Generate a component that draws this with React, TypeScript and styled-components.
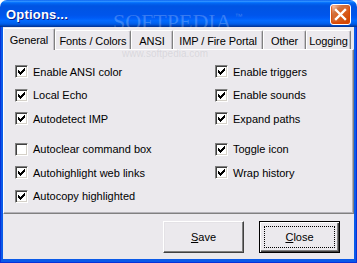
import styled, { createGlobalStyle } from 'styled-components';

const GlobalStyle = createGlobalStyle`
  html, body {
    margin: 0;
    padding: 0;
    background: #fff;
  }
  body {
    font-family: "Liberation Sans", Arial, sans-serif;
    font-size: 11px;
    color: #000;
  }
`;

type Option = { label: string; checked: boolean };

const tabs = [
  { label: 'General', width: 52 },
  { label: 'Fonts / Colors', width: 76 },
  { label: 'ANSI', width: 42 },
  { label: 'IMP / Fire Portal', width: 90 },
  { label: 'Other', width: 43 },
  { label: 'Logging', width: 45 },
];

const leftGroups: Option[][] = [
  [
    { label: 'Enable ANSI color', checked: true },
    { label: 'Local Echo', checked: true },
    { label: 'Autodetect IMP', checked: true },
  ],
  [
    { label: 'Autoclear command box', checked: false },
    { label: 'Autohighlight web links', checked: true },
    { label: 'Autocopy highlighted', checked: true },
  ],
];

const rightGroups: Option[][] = [
  [
    { label: 'Enable triggers', checked: true },
    { label: 'Enable sounds', checked: true },
    { label: 'Expand paths', checked: true },
  ],
  [
    { label: 'Toggle icon', checked: true },
    { label: 'Wrap history', checked: true },
  ],
];

// classic 7px tick, one column at a time
const tick = [4, 5, 6, 5, 4, 3, 2];

const Check = ({ checked }: { checked: boolean }) => (
  <CheckBox>
    {checked && (
      <svg width='11' height='11' viewBox='0 0 11 11' shapeRendering='crispEdges'>
        {tick.map((y, i) => (
          <rect key={i} x={2 + i} y={y} width='1' height='3' fill='#000' />
        ))}
      </svg>
    )}
  </CheckBox>
);

const OptionColumn = ({ groups, width }: { groups: Option[][]; width?: number }) => (
  <Column $width={width}>
    {groups.map((group, gi) => (
      <Group key={gi}>
        {group.map((o) => (
          <Row key={o.label}>
            <Check checked={o.checked} />
            <span>{o.label}</span>
          </Row>
        ))}
      </Group>
    ))}
  </Column>
);

export default function App() {
  return (
    <>
      <GlobalStyle />
      <Window>
        <TitleBar>
          <Title>Options...</Title>
          <Watermark>
            SOFTPEDIA<sup>™</sup>
          </Watermark>
          <CloseX aria-label='Close'>
            <svg width='19' height='19' viewBox='0 0 19 19'>
              <path d='M5 5 L14 14 M14 5 L5 14' stroke='#fff' strokeWidth='2.4' strokeLinecap='square' />
            </svg>
          </CloseX>
        </TitleBar>
        <Frame>
          <Content>
            <TabStrip>
              {tabs.map((t, i) => (
                <Tab key={t.label} $width={t.width} $active={i === 0}>
                  {t.label}
                </Tab>
              ))}
            </TabStrip>
            <Panel>
              <OptionColumn groups={leftGroups} width={200} />
              <OptionColumn groups={rightGroups} />
              <WatermarkUrl>www.softpedia.com</WatermarkUrl>
            </Panel>
            <Footer>
              <Button>
                <u>S</u>ave
              </Button>
              <Button $default>
                <u>C</u>lose
              </Button>
            </Footer>
          </Content>
        </Frame>
      </Window>
    </>
  );
}

const Window = styled.div`
  width: 357px;
  height: 263px;
  display: flex;
  flex-direction: column;
  overflow: hidden;
`;

const TitleBar = styled.div`
  position: relative;
  height: 27px;
  flex: none;
  display: flex;
  align-items: center;
  justify-content: space-between;
  padding: 0 6px 0 6px;
  box-sizing: border-box;
  border-radius: 7px 7px 0 0;
  background: linear-gradient(
    to bottom,
    #0058ee 0%,
    #3593ff 4%,
    #288eff 6%,
    #127dff 8%,
    #036ffc 10%,
    #0262ee 14%,
    #0057e5 20%,
    #0054e3 24%,
    #0055eb 56%,
    #005bf5 66%,
    #026afe 76%,
    #0062ef 86%,
    #0052d6 92%,
    #0040ab 96%,
    #003092 100%
  );
`;

const Title = styled.div`
  font-family: "Liberation Sans", Arial, sans-serif;
  font-weight: bold;
  font-size: 13px;
  color: #fff;
  letter-spacing: 0.2px;
  text-shadow: 1px 1px 0 #0a1e8a;
  padding-top: 1px;
`;

const CloseX = styled.div`
  width: 21px;
  height: 21px;
  box-sizing: border-box;
  border: 1px solid #fff;
  border-radius: 3px;
  display: flex;
  align-items: center;
  justify-content: center;
  margin-top: 2px;
  background: radial-gradient(
    circle at 90% 90%,
    #cc4600 0%,
    #dc6527 55%,
    #cd7546 70%,
    #ffccb2 90%,
    #fff 100%
  );
  box-shadow: inset 0 -1px 2px 1px #da4600;
`;

const Frame = styled.div`
  flex: 1;
  display: flex;
  padding: 0 3px 4px 3px;
  background: #0a5ae8;
  box-shadow: inset 1px 0 #0831d9, inset -1px 0 #0831d9, inset 0 -1px #0831d9;
`;

const Content = styled.div`
  flex: 1;
  display: flex;
  flex-direction: column;
  background: #ebe9ed;
`;

const TabStrip = styled.div`
  height: 22px;
  box-sizing: border-box;
  padding-top: 1px;
  display: flex;
  align-items: flex-end;
  flex: none;
`;

const Tab = styled.div<{ $width: number; $active?: boolean }>`
  position: relative;
  z-index: ${({ $active }) => ($active ? 1 : 0)};
  width: ${({ $width }) => $width}px;
  height: ${({ $active }) => ($active ? 22 : 19)}px;
  margin-bottom: ${({ $active }) => ($active ? -1 : 0)}px;
  box-sizing: border-box;
  display: flex;
  align-items: center;
  justify-content: center;
  white-space: nowrap;
  letter-spacing: -0.1px;
  background: #ebe9ed;
  border-top: 1px solid #fff;
  border-left: 1px solid #fff;
  border-right: 1px solid #808080;
  border-radius: 2px 2px 0 0;
  box-shadow: inset -1px 0 #c4c2c8;
  padding-top: ${({ $active }) => ($active ? 0 : 1)}px;
`;

const Panel = styled.div`
  position: relative;
  height: 165px;
  flex: none;
  box-sizing: border-box;
  display: flex;
  padding: 10px 0 0 11px;
  border-top: 1px solid #fff;
  border-left: 1px solid #fff;
  border-right: 1px solid #808080;
  border-bottom: 1px solid #808080;
  box-shadow: inset -1px -1px #b4b2b8;
`;

const Column = styled.div<{ $width?: number }>`
  display: flex;
  flex-direction: column;
  gap: 7px;
  width: ${({ $width }) => ($width ? `${$width}px` : 'auto')};
  flex: ${({ $width }) => ($width ? 'none' : '1')};
`;

const Group = styled.div`
  display: flex;
  flex-direction: column;
`;

const Row = styled.label`
  height: 23.5px;
  display: flex;
  align-items: center;
  gap: 5px;
  white-space: nowrap;
`;

const CheckBox = styled.span`
  width: 13px;
  height: 13px;
  flex: none;
  box-sizing: border-box;
  background: #fff;
  border: 1px solid;
  border-color: #808080 #fff #fff #808080;
  box-shadow: inset 1px 1px #404040, inset -1px -1px #d4d0c8;
  svg {
    display: block;
  }
`;

const Footer = styled.div`
  flex: 1;
  display: flex;
  justify-content: flex-end;
  align-items: flex-start;
  gap: 15px;
  padding: 7px 14px 0 0;
`;

const Button = styled.div<{ $default?: boolean }>`
  position: relative;
  width: 81px;
  height: 32px;
  box-sizing: border-box;
  display: flex;
  align-items: center;
  justify-content: center;
  background: #ebe9ed;
  border: 1px solid;
  border-color: ${({ $default }) =>
    $default ? '#000' : '#fff #404040 #404040 #fff'};
  box-shadow: ${({ $default }) =>
    $default
      ? 'inset 1px 1px #fff, inset -1px -1px #404040, inset -2px -2px #808080'
      : 'inset -1px -1px #808080, inset 1px 1px #e4e2e6'};
  u {
    text-decoration: underline;
  }
  &::after {
    content: '';
    display: ${({ $default }) => ($default ? 'block' : 'none')};
    position: absolute;
    inset: 4px;
    border: 1px dotted #000;
  }
`;

const Watermark = styled.div`
  position: absolute;
  left: 113px;
  top: 7px;
  font-family: "Liberation Serif", "Times New Roman", serif;
  font-size: 22px;
  line-height: 20px;
  color: rgba(255, 255, 255, 0.22);
  pointer-events: none;
  sup {
    font-family: "Liberation Sans", Arial, sans-serif;
    font-size: 8px;
    vertical-align: 10px;
    margin-left: 3px;
  }
`;

const WatermarkUrl = styled.div`
  position: absolute;
  left: 118px;
  top: -1px;
  font-family: "Liberation Sans", Arial, sans-serif;
  font-size: 10px;
  line-height: 10px;
  color: rgba(160, 160, 170, 0.25);
  pointer-events: none;
`;
